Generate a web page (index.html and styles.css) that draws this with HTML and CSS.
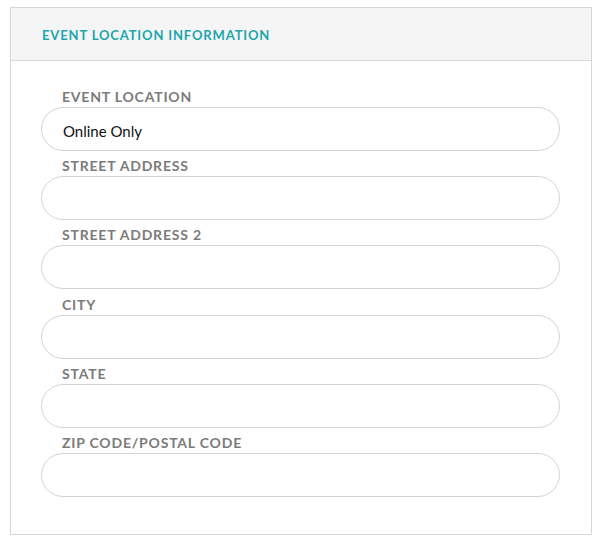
FILE: index.html
```html
<!DOCTYPE html>
<html lang="en">
<head>
<meta charset="utf-8">
<title>Event Location Information</title>
<link rel="stylesheet" href="styles.css">
</head>
<body>
<section class="panel">
  <header class="panel-head">
    <h2 class="panel-title">EVENT LOCATION INFORMATION</h2>
  </header>
  <div class="panel-body">
    <div class="field">
      <label class="field-label">EVENT LOCATION</label>
      <div class="field-input">Online Only</div>
    </div>
    <div class="field">
      <label class="field-label">STREET ADDRESS</label>
      <div class="field-input"></div>
    </div>
    <div class="field">
      <label class="field-label">STREET ADDRESS 2</label>
      <div class="field-input"></div>
    </div>
    <div class="field">
      <label class="field-label">CITY</label>
      <div class="field-input"></div>
    </div>
    <div class="field">
      <label class="field-label">STATE</label>
      <div class="field-input"></div>
    </div>
    <div class="field">
      <label class="field-label">ZIP CODE/POSTAL CODE</label>
      <div class="field-input"></div>
    </div>
  </div>
</section>
</body>
</html>
```
FILE: styles.css
```css
html, body {
  margin: 0;
  padding: 0;
  background: #ffffff;
}
body {
  padding: 7px 0 0 10px;
  font-family: Lato, "Noto Sans", sans-serif;
}
.panel {
  width: 582px;
  box-sizing: border-box;
  border: 1px solid #d6d6d6;
  background: #ffffff;
}
.panel-head {
  background: #f5f5f5;
  height: 53px;
  box-sizing: border-box;
  border-bottom: 1px solid #dcdcdc;
  display: flex;
  align-items: center;
  padding: 2px 0 0 31px;
}
.panel-title {
  margin: 0;
  font-size: 13px;
  font-weight: 700;
  letter-spacing: 0.85px;
  color: #1ca6ad;
  line-height: 20px;
}
.panel-body {
  padding: 22px 31px 37px 30px;
  display: flex;
  flex-direction: column;
}
.field {
  display: flex;
  flex-direction: column;
}
.field-label {
  margin-top: 5.2px;
  padding-left: 21px;
  font-size: 14px;
  font-weight: 700;
  letter-spacing: 0.8px;
  line-height: 20px;
  color: #7b7b7b;
}
.field:first-child .field-label {
  margin-top: 4px;
}
.field-input {
  height: 44px;
  box-sizing: border-box;
  border: 1px solid #d4d4d4;
  border-radius: 22px;
  padding: 3px 21px 0 21px;
  display: flex;
  align-items: center;
  font-size: 15px;
  color: #111111;
}
```
